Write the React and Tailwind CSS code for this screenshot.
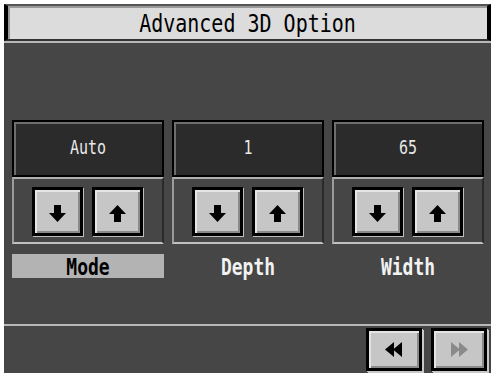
import React from "react";

const mono = { fontFamily: '"DejaVu Sans Mono", "Liberation Mono", monospace' };

function Arrow({ dir }) {
  // block arrow, down or up
  const d =
    dir === "down"
      ? "M5 0 H12 V8 H17 L8.5 17 L0 8 H5 Z"
      : "M5 17 H12 V9 H17 L8.5 0 L0 9 H5 Z";
  return (
    <svg width="17" height="17" viewBox="0 0 17 17">
      <path d={d} fill="#000" />
    </svg>
  );
}

function StepButton({ dir }) {
  return (
    <div className="w-[51px] h-[49px] border-[3px] border-black bg-[#c6c6c6] flex items-center justify-center pt-[3px] shadow-[inset_2px_2px_0_#e6e6e6,inset_-2px_-2px_0_#8a8a8a,1px_1px_0_#bdbdbd]">
      <Arrow dir={dir} />
    </div>
  );
}

function Panel({ value, label, active }) {
  return (
    <div className="w-[152px] flex flex-col">
      <div className="h-[57px] border-2 border-black bg-[#2b2b2b] shadow-[inset_2px_2px_0_#6e6e6e] flex items-center justify-center">
        <span className="inline-block text-[15px] text-[#e8e8e8] scale-y-125" style={mono}>
          {value}
        </span>
      </div>
      <div className="h-[67px] border-t-2 border-l-2 border-b-2 border-t-[#b0b0b0] border-l-[#9a9a9a] border-b-[#c0c0c0] border-r-2 border-r-[#2a2a2a] flex items-start pt-[8px] pl-[18px] gap-[9px]">
        <StepButton dir="down" />
        <StepButton dir="up" />
      </div>
      <div
        className={`mt-[10px] h-[24px] flex items-center justify-center ${
          active ? "bg-[#b3b3b3] text-black" : "text-[#f2f2f2]"
        }`}
      >
        <span className="inline-block text-[18px] font-bold scale-y-125" style={mono}>
          {label}
        </span>
      </div>
    </div>
  );
}

function NavButton({ children }) {
  return (
    <div className="w-[56px] h-[43px] border-[3px] border-black bg-[#c6c6c6] flex items-center justify-center shadow-[inset_2px_2px_0_#e4e4e4,inset_-2px_-2px_0_#8a8a8a,1px_1px_0_#c8c8c8,2px_2px_0_#c8c8c8]">
      {children}
    </div>
  );
}

export default function App() {
  return (
    <div className="w-[495px] h-[373px] bg-white pt-[4px] px-[4px] overflow-hidden">
      <div className="h-full bg-[#464646] flex flex-col">
        {/* title bar */}
        <div className="h-[37px] bg-[#dcdcdc] border-t-2 border-t-[#555] border-l-[4px] border-l-black border-r-[4px] border-r-black border-b-2 border-b-[#333] shadow-[inset_2px_2px_0_#9a9a9a] flex items-center justify-center">
          <span className="inline-block text-[20px] text-black leading-none scale-y-125" style={mono}>
            Advanced 3D Option
          </span>
        </div>
        <div className="h-[2px] bg-[#b8b8b8]" />

        {/* main */}
        <div className="h-[281px] pt-[77px] pl-[8px] flex gap-[8px]">
          <Panel value="Auto" label="Mode" active />
          <Panel value="1" label="Depth" />
          <Panel value="65" label="Width" />
        </div>

        <div className="h-[2px] bg-[#b8b8b8]" />

        {/* bottom bar */}
        <div className="flex-1 flex justify-end items-start pt-[2px] pr-[4px] gap-[9px]">
          <NavButton>
            <svg width="18" height="15" viewBox="0 0 18 15">
              <path d="M0 7.5 L9 0 V15 Z M8 7.5 L17 0 V15 Z" fill="#000" />
            </svg>
          </NavButton>
          <NavButton>
            <svg width="18" height="15" viewBox="0 0 18 15">
              <path d="M18 7.5 L9 0 V15 Z M10 7.5 L1 0 V15 Z" fill="#8a8a8a" />
            </svg>
          </NavButton>
        </div>
      </div>
    </div>
  );
}
